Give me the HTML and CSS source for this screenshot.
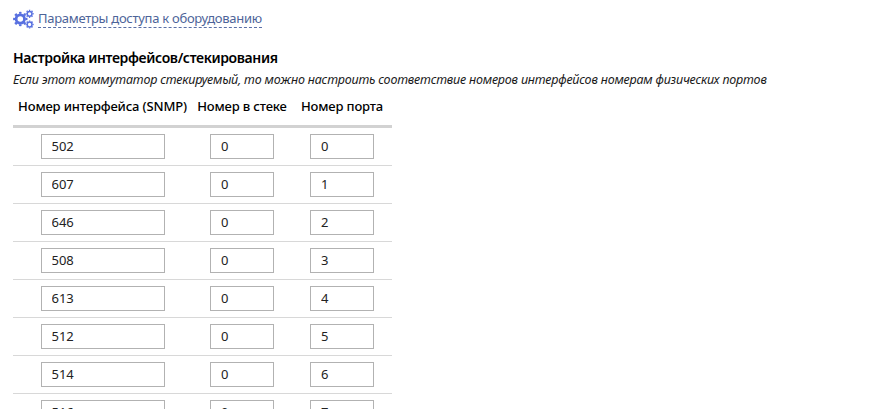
FILE: index.html
```
<!DOCTYPE html>
<html lang="ru">
<head>
	<meta charset="utf-8">
	<title>Настройка интерфейсов</title>
	<link rel="stylesheet" href="styles.css">
</head>
<body>
	<div class="toolbar">
		<svg class="gears" width="21" height="20" viewBox="0 0 21 20">
			<circle cx="7.3" cy="10" r="4.2" stroke-width="2.8"/>
			<circle cx="7.3" cy="10" r="6.2" stroke-width="2" pathLength="80" stroke-dasharray="5 5" stroke-dashoffset="2.5"/>
			<circle cx="16.6" cy="4.8" r="2.4" stroke-width="1.5"/>
			<circle cx="16.6" cy="4.8" r="3.5" stroke-width="1.2" pathLength="80" stroke-dasharray="5 5" stroke-dashoffset="2.5"/>
			<circle cx="16.6" cy="15.5" r="2.4" stroke-width="1.5"/>
			<circle cx="16.6" cy="15.5" r="3.5" stroke-width="1.2" pathLength="80" stroke-dasharray="5 5" stroke-dashoffset="2.5"/>
		</svg>
		<a class="access" href="#">Параметры доступа к оборудованию</a>
	</div>

	<h3 class="title">Настройка интерфейсов/стекирования</h3>
	<p class="hint">Если этот коммутатор стекируемый, то можно настроить соответствие номеров интерфейсов номерам физических портов</p>

	<table class="ports">
		<tr>
			<th class="iface">Номер интерфейса (SNMP)</th>
			<th>Номер в стеке</th>
			<th>Номер порта</th>
		</tr>
		<tr>
			<td><input class="wide" type="text" value="502"></td>
			<td><input type="text" value="0"></td>
			<td><input type="text" value="0"></td>
		</tr>
		<tr>
			<td><input class="wide" type="text" value="607"></td>
			<td><input type="text" value="0"></td>
			<td><input type="text" value="1"></td>
		</tr>
		<tr>
			<td><input class="wide" type="text" value="646"></td>
			<td><input type="text" value="0"></td>
			<td><input type="text" value="2"></td>
		</tr>
		<tr>
			<td><input class="wide" type="text" value="508"></td>
			<td><input type="text" value="0"></td>
			<td><input type="text" value="3"></td>
		</tr>
		<tr>
			<td><input class="wide" type="text" value="613"></td>
			<td><input type="text" value="0"></td>
			<td><input type="text" value="4"></td>
		</tr>
		<tr>
			<td><input class="wide" type="text" value="512"></td>
			<td><input type="text" value="0"></td>
			<td><input type="text" value="5"></td>
		</tr>
		<tr>
			<td><input class="wide" type="text" value="514"></td>
			<td><input type="text" value="0"></td>
			<td><input type="text" value="6"></td>
		</tr>
		<tr>
			<td><input class="wide" type="text" value="516"></td>
			<td><input type="text" value="0"></td>
			<td><input type="text" value="7"></td>
		</tr>
	</table>
</body>
</html>
```
FILE: styles.css
```
* { box-sizing: border-box; }
html { height: 100%; overflow: hidden; }
body { height: 100%; margin: 0; padding: 9px 13px 0; overflow: hidden; background: #fff; color: #000; font: 13px/18px "Noto Sans", "Open Sans", sans-serif; }
.toolbar { display: flex; height: 20px; margin-bottom: 19px; }
.gears { flex: none; margin-right: 4px; fill: none; stroke: #5870e0; }
.access { height: 19px; border-bottom: 1px dashed #5a70a8; color: #4d6499; font-size: 13px; line-height: 19px; letter-spacing: -0.28px; text-decoration: none; white-space: nowrap; }
.title { margin: 0; font-size: 14px; font-weight: 600; line-height: 20px; letter-spacing: -0.37px; }
.hint { margin: 3px 0 0; color: #1a1a1a; font-size: 12.5px; font-style: italic; line-height: 18px; letter-spacing: -0.2px; white-space: nowrap; }
.ports { width: 379px; table-layout: fixed; border-collapse: separate; border-spacing: 0; }
.ports th { width: 100px; height: 39px; padding: 0 0 3px; border-bottom: 3px solid #d2d2d2; font-size: 13px; font-weight: 500; letter-spacing: -0.15px; white-space: nowrap; }
.ports .iface { width: 179px; }
.ports td { height: 38px; padding: 0; border-bottom: 1px solid #d8d8d8; text-align: center; }
.ports input { display: block; width: 64px; height: 25px; margin: 0 auto; padding: 0 10px 2px; border: 1px solid #b2b2b2; border-radius: 0; background: #fff; color: #222; font: 13px "Noto Sans", "Open Sans", sans-serif; }
.ports .wide { width: 124px; }
```
